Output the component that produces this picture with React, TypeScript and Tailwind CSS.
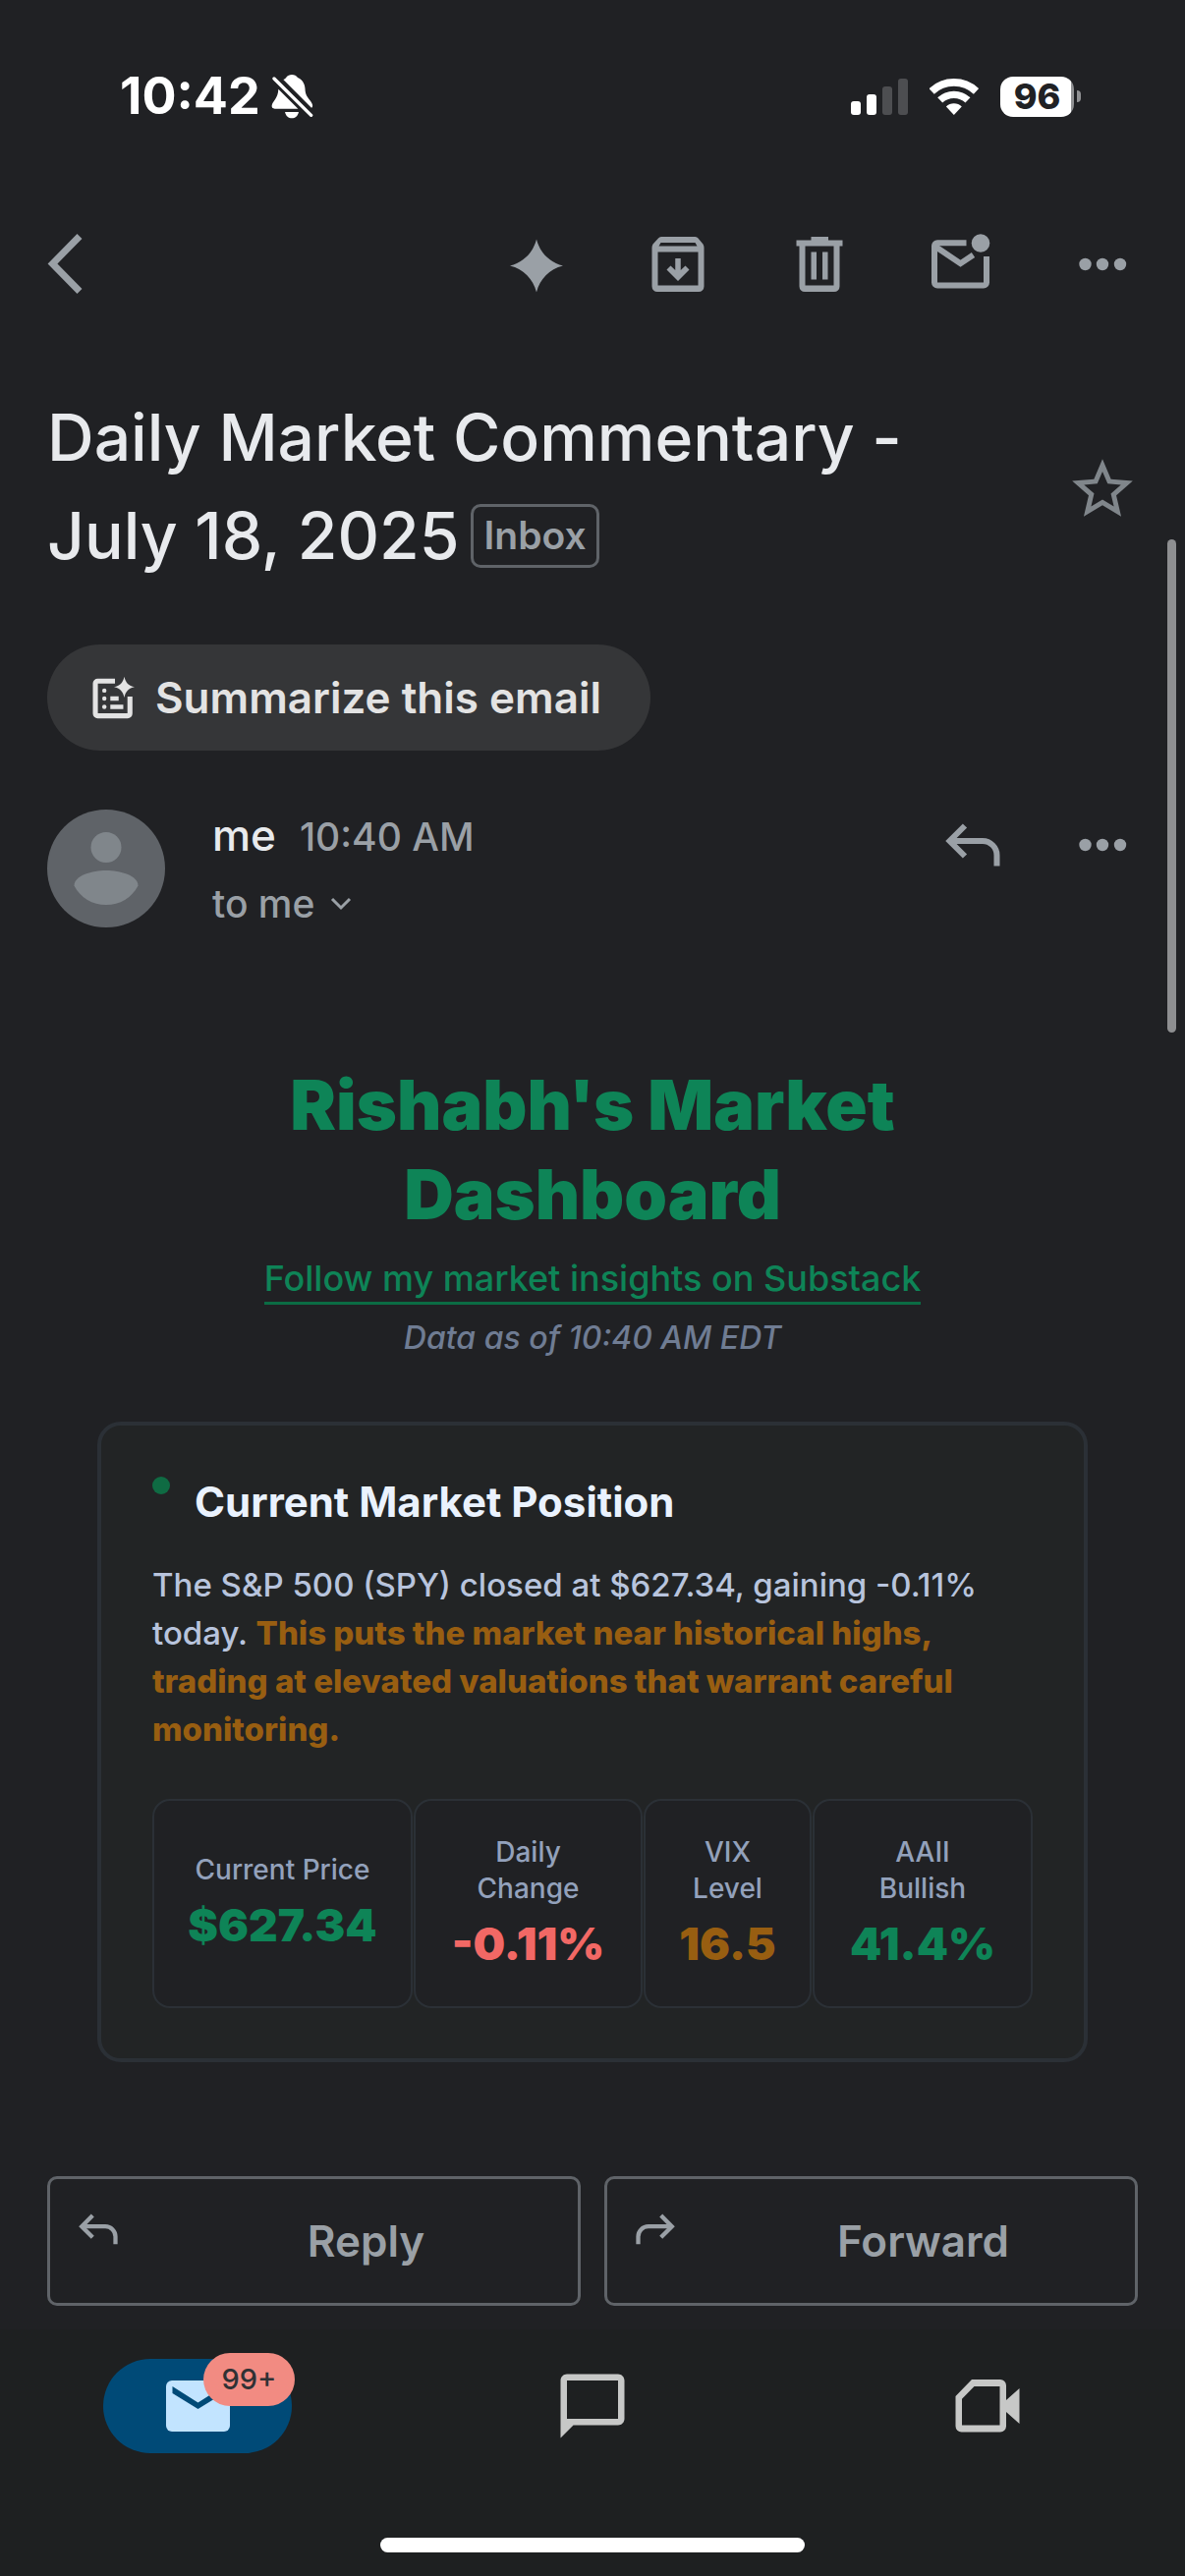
import React from "react";

function BellSlash() {
  return (
    <svg viewBox="500 45 132 138" className="h-[46px] w-[44px]" fill="currentColor" role="img" aria-label="Silent mode">
      <path d="M540 63C546 60 548 58 549 56C553 51 559 48 566 48C574 48 580 51 584 57C601 64 607 80 607 98C609 118 627 128 629 140C630 144 629 147 626 149Z" />
      <path d="M525 92L585 152H514C507 152 504 148 505 142C507 129 524 120 525 92Z" />
      <path d="M545 162H587C584 175 576 181 566 181C556 181 548 175 545 162Z" />
      <path d="M512 60L625 172" stroke="currentColor" strokeWidth="10" strokeLinecap="round" />
    </svg>
  );
}

function Signal() {
  return (
    <svg viewBox="0 0 58 37" className="h-[37px] w-[58px]" role="img" aria-label="Signal">
      <rect x="0" y="23" width="10" height="14" rx="3" fill="#fff" />
      <rect x="16" y="16" width="10" height="21" rx="3" fill="#fff" />
      <rect x="32" y="8" width="10" height="29" rx="3" fill="#4d4e51" />
      <rect x="48" y="0" width="10" height="37" rx="3" fill="#4d4e51" />
    </svg>
  );
}

function Wifi() {
  return (
    <svg viewBox="286 57 151 111" className="h-[37px] w-[50px]" fill="none" stroke="#fff" role="img" aria-label="Wi-Fi">
      <path d="M292.5 95.8A99.5 99.5 0 0 1 429.5 95.8" strokeWidth="23" />
      <path d="M318.3 123A62 62 0 0 1 403.7 123" strokeWidth="22" />
      <path d="M361 168L337 142.6A35 35 0 0 1 385 142.6Z" fill="#fff" stroke="none" />
    </svg>
  );
}

function Dots() {
  return (
    <svg viewBox="0 0 72 72" className="size-[72px]" fill="currentColor" aria-hidden="true">
      <circle cx="18.5" cy="36" r="6.2" />
      <circle cx="36" cy="36" r="6.2" />
      <circle cx="54" cy="36" r="6.2" />
    </svg>
  );
}

function ReplyArrow({ className }: { className: string }) {
  return (
    <svg viewBox="0 0 56 44" className={className} fill="none" stroke="currentColor" strokeWidth="6" aria-hidden="true">
      <path d="M20 2.5L4.5 18L20 33.5" />
      <path d="M5 18H38A14.5 14.5 0 0 1 52.5 32.5V43.5" />
    </svg>
  );
}

function IconButton({ label, children }: { label: string; children: React.ReactNode }) {
  return (
    <button type="button" aria-label={label} className="flex size-[72px] shrink-0 items-center justify-center text-[#9aa0a6]">
      {children}
    </button>
  );
}

function StatusBar() {
  return (
    <div className="flex h-[128px] items-center justify-between pt-[68px] pr-[106px] pl-[122px] text-white">
      <div className="flex items-center gap-2.5">
        <span className="text-[52px] leading-[60px] font-bold">10:42</span>
        <BellSlash />
      </div>
      <div className="flex items-center gap-[22px]">
        <Signal />
        <Wifi />
        <div className="flex items-center gap-[3px]">
          <div className="flex h-[41px] w-[75px] items-center justify-center rounded-[13px] bg-[linear-gradient(to_right,#fff_96%,#909193_96%)] text-[36px] leading-[41px] font-extrabold text-[#202124]">
            96
          </div>
          <div className="h-[12px] w-[4px] rounded-r-full bg-[#909193]" />
        </div>
      </div>
    </div>
  );
}

function Toolbar() {
  return (
    <div className="mt-[105px] flex items-center justify-between px-12">
      <button type="button" aria-label="Back" className="text-[#9aa0a6]">
        <svg viewBox="0 0 36 72" className="h-[72px] w-[36px]" fill="none" stroke="currentColor" strokeWidth="7" aria-hidden="true">
          <path d="M33 7.5L5.5 35.5L33 63.5" />
        </svg>
      </button>
      <div className="flex gap-[72px]">
        <IconButton label="Gemini">
          <svg viewBox="0 0 72 72" className="size-[72px]" fill="currentColor" aria-hidden="true">
            <path d="M36 10.5C39.5 24 49 34 63 37.5C49 41 39.5 51 36 64.5C32.5 51 23 41 9 37.5C23 34 32.5 24 36 10.5Z" />
          </svg>
        </IconButton>
        <IconButton label="Archive">
          <svg viewBox="0 0 72 72" className="size-[72px]" fill="currentColor" fillRule="evenodd" aria-hidden="true">
            <path d="M19 8H53.5Q55.5 8 56.5 9.5L61.5 15.5Q62.5 17 62.5 19V58.5A5.5 5.5 0 0 1 57 64H15A5.5 5.5 0 0 1 9.5 58.5V19Q9.5 17 10.5 15.5L16 9.5Q17 8 19 8ZM18.5 14L16.5 17.5H55.5L53.5 14ZM15.5 23.5V57.5H56.5V23.5Z" />
            <path d="M33.25 30H38.75V42L43.5 37.5L47.5 41.5L36 53L24.5 41.5L28.5 37.5L33.25 42Z" />
          </svg>
        </IconButton>
        <IconButton label="Delete">
          <svg viewBox="0 0 72 72" className="size-[72px]" fill="currentColor" fillRule="evenodd" aria-hidden="true">
            <path d="M27.5 8H45V11.5H59.5V17.5H56.5V58.5A5.5 5.5 0 0 1 51 64H21A5.5 5.5 0 0 1 15.5 58.5V17.5H12.5V11.5H27.5ZM21.5 17.5V57.5H50.5V17.5ZM27.5 23.5H33V51.5H27.5ZM39 23.5H44.5V51.5H39Z" />
          </svg>
        </IconButton>
        <IconButton label="Mark as unread">
          <svg viewBox="0 0 72 72" className="size-[72px]" fill="none" stroke="currentColor" strokeWidth="6" aria-hidden="true">
            <path d="M41.5 14.2H12A3 3 0 0 0 9 17.2V54.5A3 3 0 0 0 12 57.5H59A3 3 0 0 0 62 54.5V28" />
            <path d="M10 18L35.5 35.2L48.5 26.5" />
            <circle cx="56" cy="14.5" r="9.3" fill="currentColor" stroke="none" />
          </svg>
        </IconButton>
        <IconButton label="More options">
          <Dots />
        </IconButton>
      </div>
    </div>
  );
}

function Subject() {
  return (
    <div className="mt-[90px] flex items-center justify-between px-12">
      <h1 className="text-[66px] leading-[100px] font-medium text-[#e8eaed]">
        Daily Market Commentary -<br />
        <span className="flex items-center gap-3">
          July 18, 2025
          <span className="flex h-[65px] items-center rounded-[10px] border-[3px] border-[#5f6368] px-2.5 text-[39px] leading-[56px] font-semibold text-[#9aa0a6]">
            Inbox
          </span>
        </span>
      </h1>
      <button type="button" aria-label="Star" className="flex size-[72px] shrink-0 items-center justify-center text-[#80868b]">
        <svg viewBox="0 -1 24 24" className="size-[74px] shrink-0" fill="currentColor" aria-hidden="true">
          <path d="M22 9.24l-7.19-.62L12 2 9.19 8.63 2 9.24l5.46 4.73L5.82 21 12 17.27 18.18 21l-1.63-7.03L22 9.24zM12 15.4l-3.76 2.27 1-4.28-3.32-2.88 4.38-.38L12 6.1l1.71 4.04 4.38.38-3.32 2.88 1 4.28L12 15.4z" />
        </svg>
      </button>
    </div>
  );
}

function Summarize() {
  return (
    <div className="mt-[61px] px-12">
      <button type="button" className="flex h-[108px] items-center gap-5 rounded-full bg-[#353638] pr-[50px] pl-[46px] text-[44px] leading-[60px] font-semibold text-[#e3e3e3]">
        <svg viewBox="44 46 130 130" className="size-[44px]" fill="none" stroke="currentColor" strokeWidth="15" aria-hidden="true">
          <path d="M112 61.5H60A7 7 0 0 0 53 68.5V159A7 7 0 0 0 60 166H150A7 7 0 0 0 157 159V108" />
          <path d="M98 114H123M98 139H137" strokeWidth="13" />
          <g fill="currentColor" stroke="none">
            <circle cx="80" cy="90" r="6.5" />
            <circle cx="80" cy="114" r="6.5" />
            <circle cx="80" cy="139" r="6.5" />
            <path d="M140 48C144 66 153 76 171 79.5C153 83 144 93 140 111C136 93 127 83 109 79.5C127 76 136 66 140 48Z" />
          </g>
        </svg>
        Summarize this email
      </button>
    </div>
  );
}

function Sender() {
  return (
    <div className="mt-[60px] flex items-start px-12">
      <svg viewBox="0 0 120 120" className="size-[120px] shrink-0" role="img" aria-label="me">
        <circle cx="60" cy="60" r="60" fill="#5f6368" />
        <g fill="#80868b">
          <circle cx="60" cy="38.5" r="15.5" />
          <path d="M27.5 77.5C27.5 67 46 62 60 62C74 62 92.5 67 92.5 77.5C86 90 74 97 60 97C46 97 34 90 27.5 77.5Z" />
        </g>
      </svg>
      <div className="ml-12 flex flex-1 flex-col gap-3.5 text-[#9aa0a6]">
        <div className="flex items-baseline gap-6 leading-[52px]">
          <span className="text-[44px] font-medium text-[#e8eaed]">me</span>
          <span className="text-[39px] font-medium">10:40 AM</span>
        </div>
        <button type="button" className="flex items-center gap-4 self-start text-[39px] leading-[56px] font-medium">
          to me
          <svg viewBox="0 0 22 14" className="h-[14px] w-[22px]" fill="none" stroke="currentColor" strokeWidth="3" aria-hidden="true">
            <path d="M2 2L11 11L20 2" />
          </svg>
        </button>
      </div>
      <div className="flex gap-[60px]">
        <IconButton label="Reply">
          <ReplyArrow className="h-[44px] w-[56px]" />
        </IconButton>
        <IconButton label="Message options">
          <Dots />
        </IconButton>
      </div>
    </div>
  );
}

const METRICS = [
  { label: "Current Price", value: "$627.34", tone: "text-[#0e8457]" },
  { label: "Daily Change", value: "-0.11%", tone: "text-[#f26865]" },
  { label: "VIX Level", value: "16.5", tone: "text-[#985e11]" },
  { label: "AAII Bullish", value: "41.4%", tone: "text-[#0e8457]" },
];

function MarketEmail() {
  return (
    <article className="mx-[99px] mt-[131px]">
      <header className="flex flex-col items-center text-center">
        <h2 className="max-w-[700px] text-[70px] leading-[91px] font-black text-[#0e8457]">Rishabh's Market Dashboard</h2>
        <a href="#substack" className="mt-4 border-b-[3px] border-[#0b6c44] text-[36px] leading-[48px] font-medium text-[#0e8457]">
          Follow my market insights on Substack
        </a>
        <p className="mt-2.5 text-[32px] leading-[48px] font-medium text-[#6f7c93] italic">Data as of 10:40 AM EDT</p>
      </header>
      <section className="mt-[61px] rounded-[24px] border-4 border-[#2b3036] bg-[#222425] px-[52px] pt-[50px] pb-[51px]">
        <div className="flex items-start gap-[25px]">
          <span className="mt-0.5 size-[18px] shrink-0 rounded-full bg-[#0f6b43]" />
          <h3 className="text-[42px] leading-[56px] font-bold text-[#eaf2fe]">Current Market Position</h3>
        </div>
        <p className="mt-8 text-[33px] leading-[49px] font-medium text-[#b8c4dd]">
          The S&amp;P 500 (SPY) closed at $627.34, gaining -0.11% today.{" "}
          <strong className="font-extrabold text-[#985e11]">
            This puts the market near historical highs, trading at elevated valuations that warrant careful monitoring.
          </strong>
        </p>
        <dl className="mt-[46px] grid grid-cols-[265fr_233fr_171fr_224fr] gap-px">
          {METRICS.map((m) => (
            <div key={m.label} className="flex min-h-[213px] flex-col items-center justify-center gap-1.5 rounded-[18px] border-2 border-[#2b3036] bg-[#202124] px-[18px] text-center">
              <dt className="px-5 text-[28px] leading-[37px] font-medium text-[#93a1bb]">{m.label}</dt>
              <dd className={`text-[46px] leading-[62px] font-black ${m.tone}`}>{m.value}</dd>
            </div>
          ))}
        </dl>
      </section>
    </article>
  );
}

function Actions() {
  const box = "flex h-[132px] flex-1 items-center rounded-[10px] border-[3px] border-[#5f6368] px-[29px]";
  return (
    <div className="mt-[116px] flex gap-6 px-12 pb-6 text-[44px] font-semibold text-[#9aa0a6]">
      <button type="button" className={box}>
        <ReplyArrow className="mb-6 h-[32px] w-[40px]" />
        <span className="flex-1 pl-[66px]">Reply</span>
      </button>
      <button type="button" className={box}>
        <ReplyArrow className="mb-6 h-[32px] w-[40px] -scale-x-100" />
        <span className="flex-1 pl-[66px]">Forward</span>
      </button>
    </div>
  );
}

function BottomNav() {
  return (
    <footer className="flex flex-1 flex-col items-center bg-[#1e2021] pt-[30px] pb-6">
      <nav className="grid w-full grid-cols-3 justify-items-center">
        <button type="button" aria-label="Mail" className="relative flex h-[96px] w-[192px] items-center justify-center rounded-full bg-[#004a77]">
          <svg viewBox="0 0 65 52" className="h-[52px] w-[65px]" aria-hidden="true">
            <rect width="65" height="52" rx="6" fill="#c2e4ff" />
            <path d="M6.5 6L32.5 22.5L58.5 6V13L32.5 29L6.5 13Z" fill="#004a77" />
          </svg>
          <span className="absolute -top-1.5 -right-[3px] flex h-[54px] w-[93px] items-center justify-center rounded-full bg-[#f28b82] text-[29px] font-medium text-[#303134]">
            99+
          </span>
        </button>
        <button type="button" aria-label="Chat" className="flex h-[96px] w-[192px] items-center justify-center text-[#c7c8c7]">
          <svg viewBox="0 0 24 24" className="size-[78px]" fill="currentColor" fillRule="evenodd" aria-hidden="true">
            <path d="M20 2H4c-1.1 0-2 .9-2 2v18l4-4h14c1.1 0 2-.9 2-2V4c0-1.1-.9-2-2-2zM4 4v12h16V4z" />
          </svg>
        </button>
        <button type="button" aria-label="Meet" className="flex h-[96px] w-[192px] items-center justify-center text-[#c7c8c7]">
          <svg viewBox="0 0 66 54" className="h-[54px] w-[66px]" fill="currentColor" fillRule="evenodd" aria-hidden="true">
            <path d="M17 0H46A6 6 0 0 1 52 6V21L65.5 9V45L52 33V47.5A6 6 0 0 1 46 53.5H6.5A6 6 0 0 1 .5 47.5V17ZM19.5 7L7 19.8V46.5H45.5V7Z" />
          </svg>
        </button>
      </nav>
      <div className="mt-auto h-[15px] w-[432px] rounded-full bg-white" />
    </footer>
  );
}

export default function App() {
  return (
    <div className="relative flex min-h-screen flex-col bg-[#202124] font-['Inter','Liberation_Sans',sans-serif]">
      <StatusBar />
      <Toolbar />
      <Subject />
      <Summarize />
      <Sender />
      <MarketEmail />
      <Actions />
      <BottomNav />
      <div className="absolute top-[549px] right-[9px] h-[502px] w-[9px] rounded-full bg-[#8e8f91]" />
    </div>
  );
}
